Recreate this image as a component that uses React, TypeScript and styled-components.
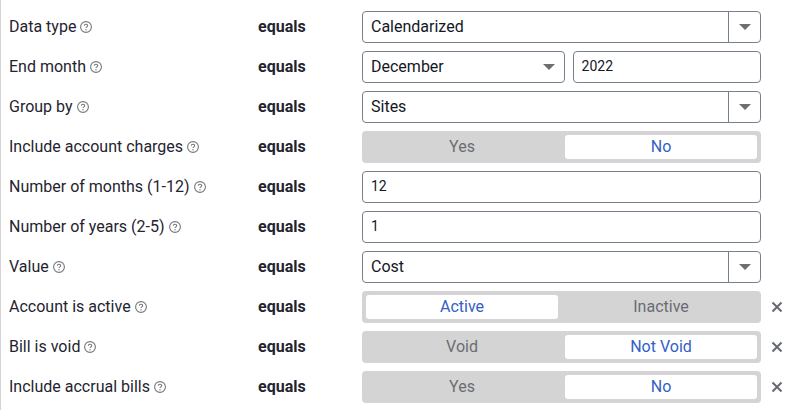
import React from "react";
import styled, { createGlobalStyle } from "styled-components";

const Global = createGlobalStyle`
  html, body { margin: 0; padding: 0; background: #fff; }
  body { font-family: Roboto, "Liberation Sans", sans-serif; }
`;

const Panel = styled.div`
  width: 786px;
  height: 410px;
  box-sizing: border-box;
  border-left: 1px solid #d4d4d4;
  padding: 11px 0 0 8px;
  display: flex;
  flex-direction: column;
  gap: 8px;
  overflow: hidden;
`;

const Row = styled.div`
  display: grid;
  grid-template-columns: 249px 104px 399px 1fr;
  height: 32px;
  align-items: center;
`;

const Label = styled.div`
  display: flex;
  align-items: center;
  gap: 4px;
  padding-bottom: 2px;
  font-size: 16px;
  color: #1f2430;
`;

const Operator = styled.div`
  padding-bottom: 2px;
  font-size: 16px;
  font-weight: 700;
  color: #1f2430;
`;

const HelpIcon = styled.svg`
  width: 12px;
  height: 12px;
  margin-top: 2px;
  flex: none;
`;

const Control = styled.div`
  display: flex;
  gap: 8px;
  height: 32px;
`;

const Field = styled.div<{ $grow?: number }>`
  flex: ${(p) => p.$grow ?? 1} 1 0;
  min-width: 0;
  box-sizing: border-box;
  height: 32px;
  display: flex;
  align-items: center;
  padding-left: 8px;
  border: 1px solid #77808c;
  border-radius: 4px;
  background: #fff;
  font-size: 16px;
  color: #14171f;
`;

const NumberText = styled.span`
  padding-bottom: 2px;
  font-size: 14px;
`;

const FieldText = styled.span`
  flex: 1;
  padding-bottom: 2px;
`;

const Addon = styled.div`
  width: 31px;
  align-self: stretch;
  display: flex;
  align-items: center;
  justify-content: center;
  border-left: 1px solid #77808c;
`;

const Caret = styled.span`
  width: 0;
  height: 0;
  border-left: 6px solid transparent;
  border-right: 6px solid transparent;
  border-top: 6px solid #6d6e73;
`;

const InlineCaret = styled(Caret)`
  margin-right: 9px;
`;

const Segments = styled.div`
  flex: 1;
  box-sizing: border-box;
  height: 32px;
  padding: 4px;
  display: grid;
  grid-template-columns: 192px 192px;
  gap: 7px;
  border-radius: 4px;
  background: #d4d4d4;
`;

const Segment = styled.div<{ $active?: boolean }>`
  display: flex;
  align-items: center;
  justify-content: center;
  padding-bottom: 2px;
  border-radius: 3px;
  font-size: 16px;
  color: ${(p) => (p.$active ? "#3260c4" : "#6a6c72")};
  background: ${(p) => (p.$active ? "#fff" : "transparent")};
`;

const Remove = styled.div`
  display: flex;
  align-items: center;
  padding-left: 10px;
  color: #666a72;
`;

const Help = () => (
  <HelpIcon viewBox="0 0 12 12" fill="none">
    <circle cx="6" cy="6" r="5.4" stroke="#77787c" strokeWidth="1.1" />
    <path d="M4.3 4.8c0-1 .8-1.5 1.7-1.5s1.7.6 1.7 1.4c0 1.2-1.7 1.1-1.7 2.4" stroke="#77787c" strokeWidth="1.1" />
    <circle cx="6" cy="8.8" r=".7" fill="#77787c" />
  </HelpIcon>
);

const Cross = () => (
  <svg width="12" height="12" viewBox="0 0 12 12" fill="none">
    <path d="M1.5 1.5l9 9M10.5 1.5l-9 9" stroke="currentColor" strokeWidth="2" />
  </svg>
);

const Select = ({ value }: { value: string }) => (
  <Field>
    <FieldText>{value}</FieldText>
    <Addon><Caret /></Addon>
  </Field>
);

const Toggle = ({ options, active }: { options: [string, string]; active: number }) => (
  <Segments>
    {options.map((o, i) => (
      <Segment key={o} $active={i === active}>{o}</Segment>
    ))}
  </Segments>
);

const FilterRow = ({ label, removable, children }: { label: string; removable?: boolean; children: React.ReactNode }) => (
  <Row>
    <Label>{label}<Help /></Label>
    <Operator>equals</Operator>
    <Control>{children}</Control>
    {removable && <Remove><Cross /></Remove>}
  </Row>
);

export default function App() {
  return (
    <>
      <Global />
      <Panel>
        <FilterRow label="Data type"><Select value="Calendarized" /></FilterRow>
        <FilterRow label="End month">
          <Field $grow={203}>
            <FieldText>December</FieldText>
            <InlineCaret />
          </Field>
          <Field $grow={188}><NumberText>2022</NumberText></Field>
        </FilterRow>
        <FilterRow label="Group by"><Select value="Sites" /></FilterRow>
        <FilterRow label="Include account charges"><Toggle options={["Yes", "No"]} active={1} /></FilterRow>
        <FilterRow label="Number of months (1-12)"><Field><NumberText>12</NumberText></Field></FilterRow>
        <FilterRow label="Number of years (2-5)"><Field><NumberText>1</NumberText></Field></FilterRow>
        <FilterRow label="Value"><Select value="Cost" /></FilterRow>
        <FilterRow label="Account is active" removable><Toggle options={["Active", "Inactive"]} active={0} /></FilterRow>
        <FilterRow label="Bill is void" removable><Toggle options={["Void", "Not Void"]} active={1} /></FilterRow>
        <FilterRow label="Include accrual bills" removable><Toggle options={["Yes", "No"]} active={1} /></FilterRow>
      </Panel>
    </>
  );
}
